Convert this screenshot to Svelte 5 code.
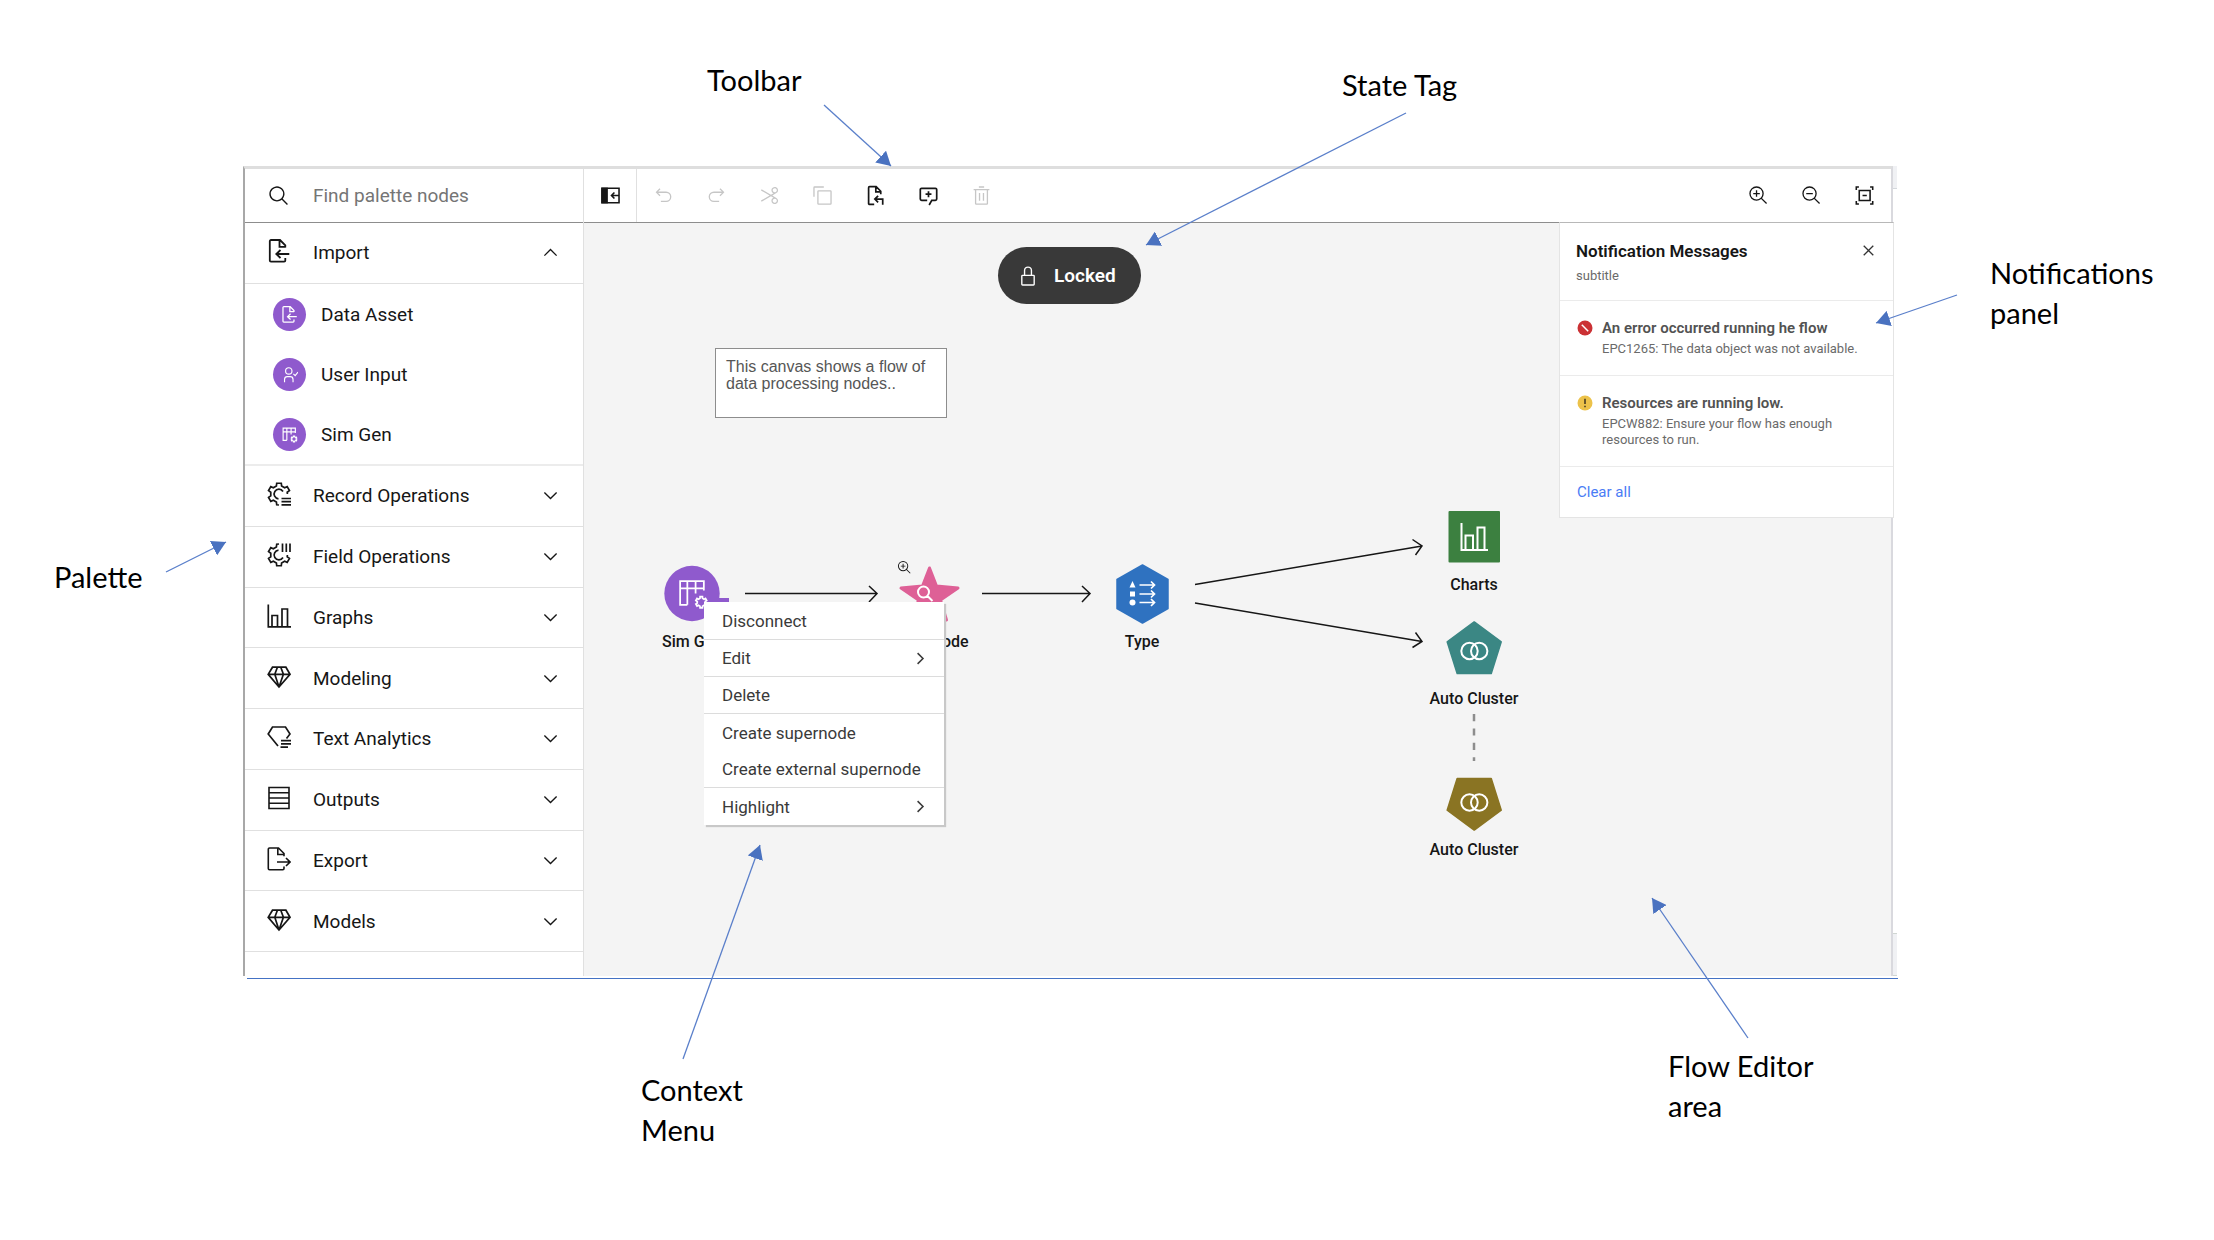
<script>
  // Points along a six-tooth gear rim, walking counter-clockwise between two tooth angles.
  function gear(cx, cy, outer, inner, from, to, closed) {
    const pts = [];
    const at = (r, deg) => {
      const a = (deg * Math.PI) / 180;
      pts.push((cx + r * Math.cos(a)).toFixed(2) + ' ' + (cy - r * Math.sin(a)).toFixed(2));
    };
    if (!closed) at(inner, from - 30);
    for (let t = from; t <= to; t += 60) {
      at(inner, t - 18);
      at(outer, t - 12);
      if (!closed && t === to) {
        at(outer, t);
        break;
      }
      at(outer, t + 12);
      at(inner, t + 18);
    }
    return 'M' + pts.join('L') + (closed ? 'Z' : '');
  }

  const gearOpen = gear(12, 12, 11, 8.4, 30, 270, false);
  const smallGear = gear(24.5, 24.5, 5.5, 4, 30, 330, true);
  const lens = 'M21.448 20A10.856 10.856 0 0 0 24 13 11 11 0 1 0 13 24a10.856 10.856 0 0 0 7-2.552L27.586 29 29 27.586ZM13 22a9 9 0 1 1 9-9 9.01 9.01 0 0 1-9 9Z';
  const gem = 'M5.5 2.2h13.4L23 9.3 12 22 1.2 9.3ZM1.2 9.3H23M12 22 7.8 9.3l2.6-7M12 22l4.4-12.7-2.6-7';
  const bars = 'M1.3 .5v22.3H24M5 22.5V11.5h5.5v11M15 22.5V5h5.5v17.5';

  const icons = {
    search: { box: 32, fill: 'M29 27.586l-7.552-7.552a11.018 11.018 0 1 0-1.414 1.414L27.586 29ZM4 13a9 9 0 1 1 9 9 9.01 9.01 0 0 1-9-9Z' },
    zoomIn: { box: 32, fill: lens + 'M18 12h-4V8h-2v4H8v2h4v4h2v-4h4Z' },
    zoomOut: { box: 32, fill: lens + 'M8 12h10v2H8z' },
    fit: { box: 32, w: 2.4, line: 'M7.5 3h-4v4.5M24.5 3h4v4.5M7.5 29h-4v-4.5M24.5 29h4v-4.5M8 8.5h16.5v15H8zM13 16h6.5' },
    undo: { box: 32, fill: 'M20 10H7.815l3.587-3.586L10 5l-6 6 6 6 1.402-1.415L7.818 12H20a6 6 0 0 1 0 12h-8v2h8a8 8 0 0 0 0-16Z' },
    redo: { box: 32, fill: 'M12 10h12.185l-3.587-3.586L22 5l6 6-6 6-1.402-1.415L24.182 12H12a6 6 0 0 0 0 12h8v2h-8a8 8 0 0 1 0-16Z' },
    cut: { box: 32, fill: 'M26.5 19.63 20.24 16l6.26-3.63a5 5 0 0 0-1.21-9.2A5.19 5.19 0 0 0 24 3a5 5 0 0 0-4.33 7.53 5 5 0 0 0 2.39 2.1l-3.82 2.21L4 6.6 3 8.34 16.24 16 3 23.68l1 1.74 14.24-8.26 3.82 2.21a5 5 0 0 0-2.39 2.1A5 5 0 0 0 24 29a5.19 5.19 0 0 0 1.29-.17 5 5 0 0 0 1.21-9.2ZM21.4 9.53a3 3 0 0 1 1.1-4.12 3 3 0 0 1 4.1 1.11 3 3 0 0 1-1.1 4.11A3 3 0 0 1 21.4 9.53Zm5.2 15.95a3 3 0 0 1-4.1 1.11 3 3 0 0 1-1.1-4.12 3 3 0 0 1 4.1-1.1 3 3 0 0 1 1.1 4.11Z' },
    copy: { box: 32, fill: 'M28 10v18H10V10h18m0-2H10a2 2 0 0 0-2 2v18a2 2 0 0 0 2 2h18a2 2 0 0 0 2-2V10a2 2 0 0 0-2-2ZM4 18H2V4a2 2 0 0 1 2-2h14v2H4Z' },
    paste: { box: 32, w: 2.6, line: 'M14 29.5H7A1.5 1.5 0 0 1 5.5 28V4A1.5 1.5 0 0 1 7 2.5h10l7 7V14M16.5 3v7.5H24M15.5 21.5H27V30M20 16.5l-5 5 5 5' },
    comment: { box: 32, w: 2.6, line: 'M14 23.5H5.5a2 2 0 0 1-2-2V7a2 2 0 0 1 2-2h21a2 2 0 0 1 2 2v14.5a2 2 0 0 1-2 2H21l-4 7M16 9.5v9M11.5 14h9' },
    trash: { box: 32, fill: 'M12 12h2v12h-2zM18 12h2v12h-2zM4 6v2h2v20a2 2 0 0 0 2 2h16a2 2 0 0 0 2-2V8h2V6zM8 28V8h16v20zM12 2h8v2h-8z' },
    panel: { box: 32, w: 2.4, line: 'M3 5h26v22H3zM28 16H18M22 11.5 17.5 16l4.5 4.5', fill: 'M2 4h10v24H2z' },
    lock: { box: 32, fill: 'M24 14h-2V8a6 6 0 0 0-12 0v6H8a2 2 0 0 0-2 2v12a2 2 0 0 0 2 2h16a2 2 0 0 0 2-2V16a2 2 0 0 0-2-2ZM12 8a4 4 0 0 1 8 0v6h-8ZM24 28H8V16h16Z' },
    close: { box: 32, fill: 'M24 9.4 22.6 8 16 14.6 9.4 8 8 9.4l6.6 6.6L8 22.6 9.4 24l6.6-6.6 6.6 6.6 1.4-1.4-6.6-6.6z' },
    down: { box: 16, fill: 'M8 11 3 6l.7-.7L8 9.6l4.3-4.3.7.7z' },
    up: { box: 16, fill: 'M8 5l5 5-.7.7L8 6.4l-4.3 4.3L3 10z' },
    right: { box: 16, fill: 'M11 8l-5 5-.9-.9L9.2 8 5.1 3.9 6 3z' },
    import: { box: 24, w: 1.8, line: 'M18.3 19v2.5a1.2 1.2 0 0 1-1.2 1.2H4a1.2 1.2 0 0 1-1.2-1.2V2.2A1.2 1.2 0 0 1 4 1h9l5.3 5.3v2.2M12.5 1v6.8h6M22.3 15H9.5M13.5 11 9.3 15l4.2 4' },
    export: { box: 24, w: 1.6, line: 'M17 19.5v2a1.2 1.2 0 0 1-1.2 1.2H2.5a1.2 1.2 0 0 1-1.2-1.2V2.2A1.2 1.2 0 0 1 2.5 1h9L17 6.5v2.7M10.8 1v6.5H17M10 15h13M19 11l4 4-4 4' },
    record: { box: 24, w: 1.7, line: gearOpen + 'M16 9.5A4.8 4.8 0 1 0 11.5 16.8M14.5 16.5H24M14.5 19.7H24M14.5 22.8H24' },
    field: { box: 24, w: 1.7, flip: true, line: gearOpen + 'M16 9.5A4.8 4.8 0 1 0 11.5 16.8M15.5 15v8.5M19.3 15v8.5M23 15v8.5' },
    graphs: { box: 24, w: 1.7, line: bars },
    gem: { box: 24, w: 1.7, line: gem },
    text: { box: 24, w: 1.7, line: 'M11 21 1.2 9 5.5 2h13L23 9l-3.5 4.5M14 15.7h10M14 18.9h10M13.5 22.2H21' },
    outputs: { box: 24, w: 1.6, line: 'M2 1.5h20v21H2zM2 6.7h20M2 12h20M2 17.3h20' },
    user: { box: 24, w: 1.6, line: 'M5 23v-4a4 4 0 0 1 4-4h4a4 4 0 0 1 4 4v4M11 11.5a4.5 4.5 0 1 0 0-9 4.5 4.5 0 0 0 0 9M17.5 11l2.5 2.5 4-5' },
    table: { box: 32, w: 2.2, line: 'M11 27H4V4h23v9M4 11h23M11 4v23M19 4v12' + smallGear }
  };

  const categories = [
    { icon: 'record', name: 'Record Operations' },
    { icon: 'field', name: 'Field Operations' },
    { icon: 'graphs', name: 'Graphs' },
    { icon: 'gem', name: 'Modeling' },
    { icon: 'text', name: 'Text Analytics' },
    { icon: 'outputs', name: 'Outputs' },
    { icon: 'export', name: 'Export' },
    { icon: 'gem', name: 'Models' }
  ];
  const imports = [
    { icon: 'import', name: 'Data Asset' },
    { icon: 'user', name: 'User Input' },
    { icon: 'table', name: 'Sim Gen' }
  ];
  const tools = [
    { icon: 'undo', name: 'Undo', off: true },
    { icon: 'redo', name: 'Redo', off: true },
    { icon: 'cut', name: 'Cut', off: true },
    { icon: 'copy', name: 'Copy', off: true },
    { icon: 'paste', name: 'Paste' },
    { icon: 'comment', name: 'Add comment' },
    { icon: 'trash', name: 'Delete', off: true }
  ];
  const zooms = [
    { icon: 'zoomIn', name: 'Zoom in' },
    { icon: 'zoomOut', name: 'Zoom out' },
    { icon: 'fit', name: 'Zoom to fit' }
  ];
  const menu = [
    { name: 'Disconnect', rule: true },
    { name: 'Edit', sub: true, rule: true },
    { name: 'Delete', rule: true },
    { name: 'Create supernode' },
    { name: 'Create external supernode', rule: true },
    { name: 'Highlight', sub: true }
  ];
  // Centre of each node caption on the canvas.
  const captions = [
    { name: 'Sim Gen', x: 108, y: 418 },
    { name: 'Supernode', x: 346, y: 418 },
    { name: 'Type', x: 558, y: 418 },
    { name: 'Charts', x: 890, y: 361 },
    { name: 'Auto Cluster', x: 890, y: 475 },
    { name: 'Auto Cluster', x: 890, y: 626 }
  ];
  const callouts = [
    { lines: ['Toolbar'], x: 707, y: 60, from: [824, 105], to: [891, 166] },
    { lines: ['State Tag'], x: 1342, y: 65, from: [1406, 113], to: [1146, 245] },
    { lines: ['Notifications', 'panel'], x: 1990, y: 253, from: [1957, 295], to: [1876, 323] },
    { lines: ['Palette'], x: 54, y: 557, from: [166, 572], to: [226, 542] },
    { lines: ['Context', 'Menu'], x: 641, y: 1070, from: [683, 1059], to: [760, 845] },
    { lines: ['Flow Editor', 'area'], x: 1668, y: 1046, from: [1748, 1038], to: [1652, 898] }
  ];
</script>

{#snippet glyph(name)}
  {@const i = icons[name]}
  <svg class="icon" viewBox="0 0 {i.box} {i.box}" aria-hidden="true">
    <g transform={i.flip ? 'matrix(1 0 0 -1 0 24)' : undefined}>
      {#if i.fill}<path d={i.fill} fill="currentColor" />{/if}
      {#if i.line}<path d={i.line} fill="none" stroke="currentColor" stroke-width={i.w} />{/if}
    </g>
  </svg>
{/snippet}

<div class="page">
  <div class="editor">
    <aside class="palette">
      <label class="search">
        {@render glyph('search')}
        <input type="text" placeholder="Find palette nodes" aria-label="Find palette nodes" />
      </label>
      <div class="list">
        <button class="category">
          {@render glyph('import')}<span>Import</span>
          <span class="chevron">{@render glyph('up')}</span>
        </button>
        {#each imports as item, n}
          <button class="entry" class:last={n === 2}>
            <span class="disc">{@render glyph(item.icon)}</span>{item.name}
          </button>
        {/each}
        {#each categories as item}
          <button class="category">
            {@render glyph(item.icon)}<span>{item.name}</span>
            <span class="chevron">{@render glyph('down')}</span>
          </button>
        {/each}
      </div>
    </aside>

    <main class="work">
      <div class="toolbar">
        <button class="tool toggle" aria-label="Close palette">{@render glyph('panel')}</button>
        {#each tools as t}
          <button class="tool" disabled={t.off} aria-label={t.name}>{@render glyph(t.icon)}</button>
        {/each}
        <span class="space"></span>
        {#each zooms as t}
          <button class="tool" aria-label={t.name}>{@render glyph(t.icon)}</button>
        {/each}
      </div>

      <div class="canvas">
        <svg class="flow" width="1307" height="753" viewBox="584 223 1307 753" aria-hidden="true">
          <g fill="none" stroke="#161616" stroke-width="1.5">
            <path d="M745 593.5H877M869 586l8 7.5-8 8.5" />
            <path d="M982 593.5h108M1082 586l8 7.5-8 8.5" />
            <path d="M1195 584.5 1422 546M1412.5 539.5l9.5 6.5-6.500 9" />
            <path d="M1195 603l227 38.5M1415.5 632.5l6.500 9-9.5 6" />
          </g>
          <path d="M1474 714v47" stroke="#8d8d8d" stroke-width="2.5" stroke-dasharray="7.2 7.2" />

          <circle cx="692" cy="593.5" r="27.7" fill="#8f5acd" />
          <path d="M708 598h21v8h-21z" fill="#8f5acd" />
          <svg x="676" y="577" width="33" height="33" viewBox="0 0 32 32">
            <path d={icons.table.line} fill="none" stroke="#fff" stroke-width="1.7" />
          </svg>

          <path d="M929.5 568l7 18 21.5 2-17.5 12 6 20-17-12-17 12 6-20-17.5-12 21.5-2z" fill="#de6096" stroke="#de6096" stroke-width="3" stroke-linejoin="round" />
          <path d="M929 592a5.5 5.5 0 1 1-11 0 5.5 5.5 0 0 1 11 0M927.5 596l5 5" fill="none" stroke="#fff" stroke-width="2" />
          <svg x="897" y="560" width="15" height="15" viewBox="0 0 32 32"><path d={icons.zoomIn.fill} fill="#161616" /></svg>

          <path d="M1142.5 565l25.5 14.5v29L1142.5 623 1117 608.5v-29z" fill="#2f72c0" stroke="#2f72c0" stroke-width="1.5" stroke-linejoin="round" />
          <path d="M1132.5 581l3 6.5h-6zM1130 591.5h5v5h-5z" fill="#fff" />
          <circle cx="1132.5" cy="602.5" r="3" fill="#fff" />
          <path d="M1139.5 585H1154M1151 581.5l3.5 3.5-3.5 3.5M1139.5 594H1154M1151 590.5l3.5 3.5-3.5 3.5M1139.5 602.5H1154M1151 599l3.5 3.5-3.5 3.5" fill="none" stroke="#fff" stroke-width="1.7" />

          <rect x="1448.5" y="511" width="51.5" height="51.5" rx="1" fill="#3c8040" />
          <path d="M1461.5 523v27H1488M1465.5 550v-14.5h7.5V550M1477.5 550v-22.5h7V550" fill="none" stroke="#fff" stroke-width="2" />

          <path d="M1474.2 622l27 19.8-10 31.7h-34l-10-31.7z" fill="#3b8784" stroke="#3b8784" stroke-width="1.6" stroke-linejoin="round" />
          <path d="M1474.2 830l27-19.8-10-31.7h-34l-10 31.7z" fill="#8a7423" stroke="#8a7423" stroke-width="1.6" stroke-linejoin="round" />
          <g fill="none" stroke="#fff" stroke-width="2">
            <circle cx="1469.5" cy="651" r="8.2" /><circle cx="1479.2" cy="651" r="8.2" />
            <circle cx="1469.5" cy="802.5" r="8.2" /><circle cx="1479.2" cy="802.5" r="8.2" />
          </g>
        </svg>

        {#each captions as c}
          <span class="caption" style="left:{c.x}px;top:{c.y}px">{c.name}</span>
        {/each}

        <div class="tag">{@render glyph('lock')}<span>Locked</span></div>
        <p class="note">This canvas shows a flow of data processing nodes..</p>

        <div class="menu" role="menu">
          {#each menu as m}
            <button role="menuitem" class:rule={m.rule}>
              {m.name}{#if m.sub}{@render glyph('right')}{/if}
            </button>
          {/each}
        </div>

        <section class="notices">
          <header>
            <div>
              <h2>Notification Messages</h2>
              <p>subtitle</p>
            </div>
            <button class="close" aria-label="Close">{@render glyph('close')}</button>
          </header>
          <article>
            <svg class="status" viewBox="0 0 16 16" aria-hidden="true">
              <circle cx="8" cy="8" r="7.5" fill="#cb3134" /><path d="M4.8 4.8l6.4 6.4" stroke="#fff" stroke-width="1.5" />
            </svg>
            <div>
              <h3>An error occurred running he flow</h3>
              <p>EPC1265: The data object was not available.</p>
            </div>
          </article>
          <article>
            <svg class="status" viewBox="0 0 16 16" aria-hidden="true">
              <circle cx="8" cy="8" r="7.5" fill="#ecc24a" /><path d="M8 3.8v5.2M8 10.7v1.6" stroke="#3d3520" stroke-width="1.5" />
            </svg>
            <div>
              <h3>Resources are running low.</h3>
              <p>EPCW882: Ensure your flow has enough resources to run.</p>
            </div>
          </article>
          <footer><button class="clear">Clear all</button></footer>
        </section>
      </div>
    </main>
    <span class="edge top"></span>
    <span class="edge bottom"></span>
  </div>
  <hr />

  <svg class="arrows" width="2214" height="1240" aria-hidden="true">
    <marker id="head" viewBox="0 0 14 16" refX="14" refY="8" markerWidth="14" markerHeight="16" markerUnits="userSpaceOnUse" orient="auto">
      <path d="M0 0l14 8L0 16z" fill="#4a72c0" />
    </marker>
    {#each callouts as c}
      <line x1={c.from[0]} y1={c.from[1]} x2={c.to[0]} y2={c.to[1]} stroke="#5a7fca" stroke-width="1.3" marker-end="url(#head)" />
    {/each}
  </svg>
  {#each callouts as c}
    <div class="callout" style="left:{c.x}px;top:{c.y}px">
      {#each c.lines as l}<div>{l}</div>{/each}
    </div>
  {/each}
</div>

<style>
  :global(body) { margin: 0; background: #fff; }
  .page {
    position: relative;
    box-sizing: border-box;
    min-height: 1240px;
    padding: 166px 321px 0 243px;
    overflow: hidden;
    font-family: Roboto, "Liberation Sans", sans-serif;
    color: #161616;
  }
  button {
    margin: 0;
    padding: 0;
    border: 0;
    background: none;
    color: inherit;
    font: inherit;
    text-align: left;
  }
  h2, h3, p { margin: 0; }
  .icon { display: block; flex: none; width: 21px; height: 21px; }

  .editor {
    position: relative;
    display: flex;
    min-height: 807px;
    border-top: 3px solid #dedede;
    border-left: 2px solid #a8a8a8;
    border-right: 2px solid #d9d9de;
  }
  .palette {
    display: flex;
    flex-direction: column;
    flex: none;
    width: 338px;
    border-right: 1px solid #e0e0e0;
  }
  .search {
    display: flex;
    align-items: center;
    gap: 23px;
    height: 53px;
    padding-left: 23px;
    border-bottom: 1px solid #8d8d8d;
  }
  .search .icon { width: 22px; height: 22px; }
  .search input {
    flex: 1;
    min-width: 0;
    padding: 0;
    border: 0;
    outline: 0;
    background: none;
    font: inherit;
    font-size: 19px;
  }
  .search input::placeholder { color: #757575; opacity: 1; }
  .list {
    display: grid;
    grid-auto-rows: 1fr;
    flex: 1;
    padding-bottom: 24px;
    font-size: 19px;
  }
  .category {
    display: flex;
    align-items: center;
    gap: 22px;
    padding: 0 22px;
    border-bottom: 1px solid #e0e0e0;
  }
  .category > :global(.icon) { width: 24px; height: 24px; margin-bottom: 3px; }
  .chevron { margin-left: auto; }
  .entry { display: flex; align-items: center; gap: 15px; padding-left: 28px; }
  .entry.last { border-bottom: 2px solid #ececec; }
  .disc {
    display: grid;
    place-items: center;
    width: 33px;
    height: 33px;
    border-radius: 50%;
    background: #8f5acd;
    color: #fff;
  }
  .disc .icon { width: 17px; height: 17px; }

  .work { display: flex; flex-direction: column; flex: 1; min-width: 0; }
  .toolbar { display: flex; height: 53px; border-bottom: 1px solid #8d8d8d; }
  .tool { display: grid; place-items: center; width: 53px; }
  .tool:disabled { color: #c6c6c6; }
  .toggle { box-sizing: border-box; border-right: 1px solid #e0e0e0; }
  .space { flex: 1; }
  .canvas { position: relative; flex: 1; background: #f4f4f4; }
  .flow { position: absolute; left: 0; top: 0; }
  .caption {
    position: absolute;
    transform: translate(-50%, -50%);
    font-size: 16px;
    font-weight: 500;
    white-space: nowrap;
  }
  .tag {
    position: absolute;
    left: 414px;
    top: 24px;
    display: flex;
    align-items: center;
    gap: 15px;
    box-sizing: border-box;
    height: 57px;
    padding: 0 25px 0 19px;
    border-radius: 29px;
    background: #393939;
    color: #fff;
    font-size: 19px;
    font-weight: 600;
  }
  .tag .icon { width: 22px; height: 22px; }
  .note {
    position: absolute;
    left: 131px;
    top: 125px;
    box-sizing: border-box;
    width: 232px;
    height: 70px;
    padding: 9px 10px;
    border: 1px solid #8d8d8d;
    background: #fff;
    color: #565656;
    font: 16px/17px "Liberation Sans", sans-serif;
  }
  .menu {
    position: absolute;
    left: 120px;
    top: 379px;
    box-sizing: border-box;
    width: 240px;
    padding-top: 1px;
    background: #fff;
    box-shadow: 2px 2px 1px #c8c8c8;
    font-size: 17px;
    color: #3a3a3a;
  }
  .menu button {
    display: flex;
    align-items: center;
    justify-content: space-between;
    width: 100%;
    height: 37px;
    padding: 0 14px 0 18px;
    box-sizing: border-box;
    white-space: nowrap;
  }
  .menu button.rule { border-bottom: 1px solid #dcdcdc; }
  .menu .icon { width: 19px; height: 19px; }

  .notices {
    position: absolute;
    right: -3px;
    top: -1px;
    box-sizing: border-box;
    width: 335px;
    border: 1px solid #e4e4e4;
    border-top-color: #b8b8b8;
    background: #fff;
    color: #6a6a6a;
    font-size: 13px;
    line-height: 16px;
  }
  header { display: flex; justify-content: space-between; padding: 17px 14px 16px 16px; }
  h2 { margin-bottom: 6px; color: #161616; font-size: 17px; line-height: 22px; font-weight: 600; }
  .close { width: 21px; height: 21px; color: #333; }
  article { display: flex; gap: 9px; padding: 18px 20px 18px 17px; border-top: 1px solid #ebebeb; }
  .status { flex: none; width: 16px; height: 16px; margin-top: 1px; }
  h3 { margin-bottom: 4px; color: #525252; font-size: 15px; line-height: 18px; font-weight: 600; }
  footer { padding: 16px 17px; border-top: 1px solid #ebebeb; }
  .clear { color: #4a7cf5; font-size: 15px; line-height: 18px; }

  .edge { position: absolute; right: -6px; width: 4px; background: #f0f1f4; }
  .edge.top { top: -3px; height: 22px; border-bottom: 1px solid #d4d8dc; }
  .edge.bottom { bottom: 0; height: 41px; border: 1px solid #d0d6d2; border-width: 1px 0; }
  hr { margin: 2px -5px 0 4px; border: 0; border-top: 1px solid #4472c4; }
  .arrows { position: absolute; left: 0; top: 0; pointer-events: none; }
  .callout {
    position: absolute;
    color: #000;
    font: 29px/40px Lato, sans-serif;
    white-space: nowrap;
  }
</style>
